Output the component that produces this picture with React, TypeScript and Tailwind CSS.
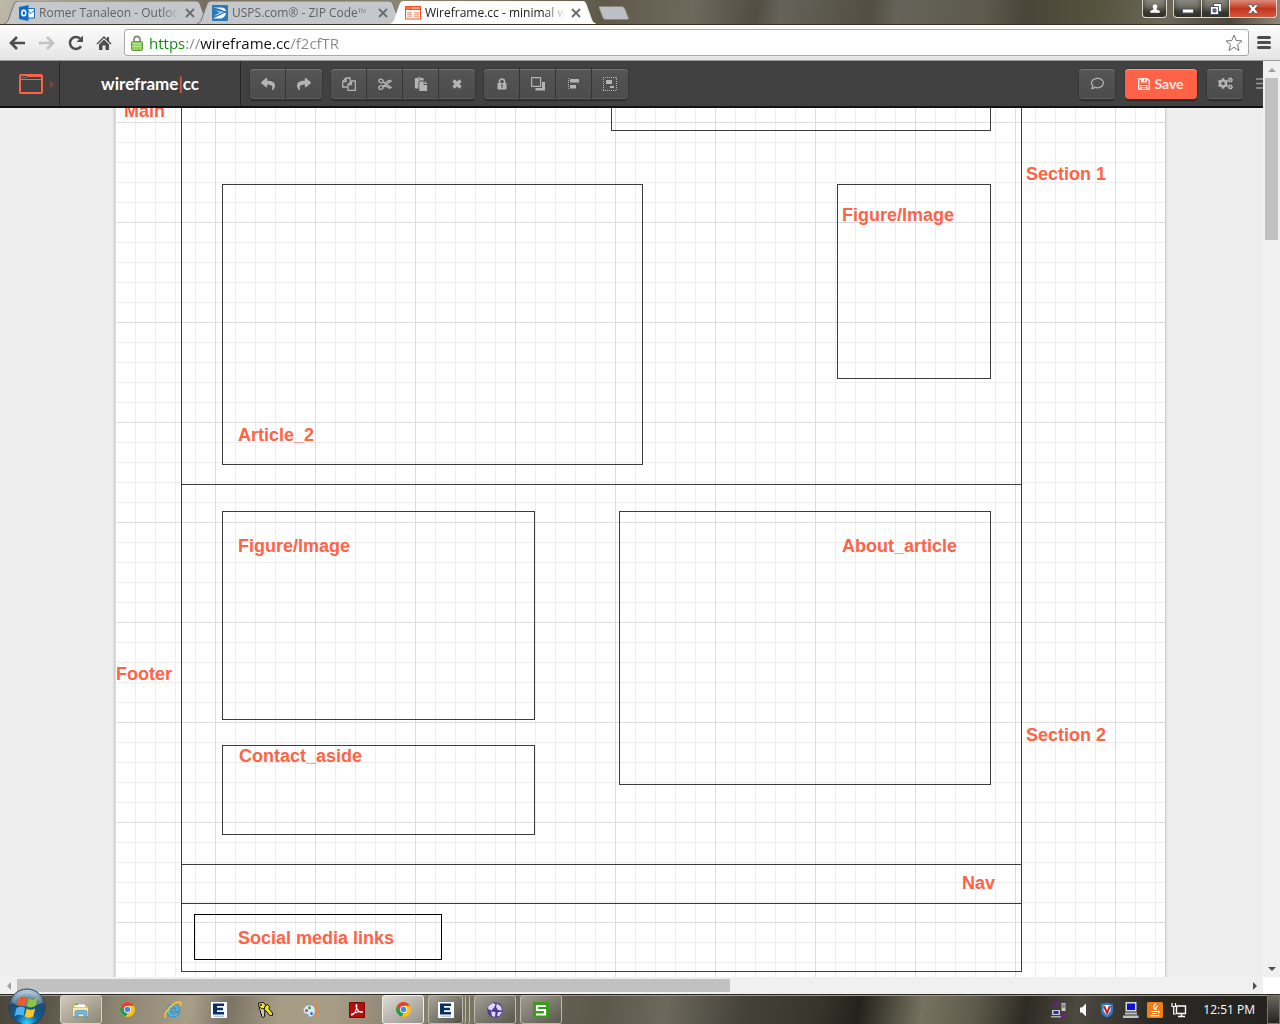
import React from 'react';
import { FaCogs, FaPaste, FaRegComment, FaReply, FaShare } from 'react-icons/fa';

type Children = { children?: React.ReactNode };

/* ---------- Browser chrome ---------- */

const OutlookIcon = () => (
  <svg viewBox="0 0 16 16" className="size-4">
    <path d="M8 3.500h7.500v9.500H8z" fill="#fff" stroke="#0f6cbd" />
    <path d="M8 5l4 3.500L15.500 5" fill="none" stroke="#0f6cbd" />
    <path d="M0 2l9.500-2v16L0 14z" fill="#0f6fc6" />
    <ellipse cx="4.800" cy="8" rx="2" ry="2.800" fill="none" stroke="#fff" strokeWidth="1.500" />
  </svg>
);

const UspsIcon = () => (
  <svg viewBox="0 0 16 16" className="size-4">
    <rect width="16" height="16" rx="1" fill="#2f78b7" />
    <path d="M1 2.500h9q4 .5 4 3.500H12Q9 4 1 2.500z" fill="#e6f0f8" />
    <path d="M1 13.500L12.500 8H14q-1 4.500-5 5.500z" fill="#fff" />
    <path d="M3 5.500l9 1.500L2 11.500q3-3 6-4z" fill="#c9dff0" />
  </svg>
);

const WireframeIcon = () => (
  <svg viewBox="0 0 16 16" className="size-4">
    <rect x="0.500" y="1.500" width="15" height="12.500" fill="#fff" stroke="#f4511e" />
    <path d="M0 1h16v4H0z" fill="#f4511e" />
    <path d="M1.500 3h1M3.500 3h1M6 3h8.500" stroke="#fff" />
    <path d="M2 7.500h5M2 9.500h5M2 11.500h5M9 7.500h5M9 9.500h5M9 11.500h5" stroke="#fbb092" strokeWidth="1.300" />
  </svg>
);

const tabs = [
  { title: 'Romer Tanaleon - Outlook', icon: <OutlookIcon />, active: false },
  { title: 'USPS.com® - ZIP Code™ Lookup', icon: <UspsIcon />, active: false },
  { title: 'Wireframe.cc - minimal wireframing', icon: <WireframeIcon />, active: true },
];

function Tab({ title, icon, active }: (typeof tabs)[number]) {
  return (
    <div className={active ? 'relative z-10 -mr-[13px] h-[23px] w-[206px]' : 'relative -mr-[13px] h-[23px] w-[206px]'}>
      <svg viewBox="0 0 206 23" preserveAspectRatio="none" className="absolute inset-0 size-full">
        <path
          d="M0 23C3 22 4 20 5 17L10 3Q11 0 14 0H192Q195 0 196 3L201 17C202 20 203 22 206 23"
          fill={active ? '#fdfdfd' : '#c5c8cb'}
          stroke={active ? '#eeeeee' : '#777469'}
        />
      </svg>
      <div className="relative flex h-full items-center pr-[14px] pl-[15px]">
        {icon}
        <button
          role="tab"
          aria-selected={active}
          className={
            active
              ? 'ml-1 w-[140px] overflow-hidden text-left text-xs whitespace-nowrap text-[#222] [mask-image:linear-gradient(to_right,#000_118px,transparent)]'
              : 'ml-1 w-[140px] overflow-hidden text-left text-xs whitespace-nowrap text-[#606264] [mask-image:linear-gradient(to_right,#000_124px,transparent)]'
          }
        >
          {title}
        </button>
        <button aria-label={`Close ${title}`} className="ml-1.5 text-[#6b6b6b]">
          <svg viewBox="0 0 10 10" className="size-[10px]">
            <path d="M1 1l8 8M9 1L1 9" stroke="currentColor" strokeWidth="1.800" />
          </svg>
        </button>
      </div>
    </div>
  );
}

function WindowControls() {
  const glass =
    'flex h-[18px] items-center justify-center border-white/70 bg-linear-to-b from-[#8a877e] via-[#6e6b60] to-[#5a574a] shadow-[inset_0_-7px_5px_#34322a]';
  return (
    <div className="ml-auto flex items-start pr-[3px]">
      <button aria-label="User" className={`${glass} mr-1.5 w-[25px] rounded-b border border-t-0`}>
        <svg viewBox="0 0 10 10" className="size-[10px]">
          <path
            d="M5 0a2.500 2.500 0 012 4.200V5.500l3 1.200V9H0V6.700l3-1.200V4.200A2.500 2.500 0 015 0z"
            fill="#fff"
            stroke="#444"
            strokeWidth="0.500"
          />
        </svg>
      </button>
      <button aria-label="Minimize" className={`${glass} w-[29px] rounded-bl border border-t-0`}>
        <svg viewBox="0 0 12 6" className="mt-1 h-[6px] w-3">
          <rect x="0.500" y="1" width="11" height="4" fill="#fff" stroke="#50536c" />
        </svg>
      </button>
      <button aria-label="Restore" className={`${glass} w-[27px] border-b`}>
        <svg viewBox="0 0 12 12" className="size-3">
          <path d="M3.500.500h8v8h-8z" fill="#fff" stroke="#50536c" />
          <path d="M.500 3.500h8v8h-8z" fill="#fff" stroke="#50536c" />
          <path d="M3 6h3v3H3z" fill="#777" stroke="#50536c" />
        </svg>
      </button>
      <button
        aria-label="Close"
        className="flex h-[18px] w-[48px] items-center justify-center rounded-br border border-t-0 border-white/70 bg-linear-to-b from-[#d98c7c] via-[#c3351b] to-[#d0563a]"
      >
        <svg viewBox="0 0 12 10" className="h-[10px] w-3">
          <path
            d="M.500.500H4L6 3l2-2.500h3.500L8 5l3.500 4.500H8L6 7 4 9.500H.500L4 5z"
            fill="#fff"
            stroke="#53545f"
            strokeWidth="0.800"
          />
        </svg>
      </button>
    </div>
  );
}

function TitleBar() {
  return (
    <div className="flex h-[25px] shrink-0 border-b border-[#3c3729] bg-[linear-gradient(97deg,#bdb8a8_0%,#77705f_16%,#8b8574_32%,#5f594a_47%,#6f695c_54%,#524e41_59%,#65625a_61%,#524e41_68%,#65635a_70%,#5d594b_77%,#494538_80%,#57543f_86%,#6d685a_91%,#4b473a_96%,#8c887b_100%)] pl-1">
      <div role="tablist" className="flex items-end">
        {tabs.map((t) => (
          <Tab key={t.title} {...t} />
        ))}
      </div>
      <button aria-label="New tab" className="mt-[6px] ml-[9px] h-[14px] pl-1.5">
        <svg viewBox="0 0 32 14" className="h-[14px] w-8">
          <path
            d="M1 1.500Q1 .500 2 .500H24Q26 .500 27 3L30.500 12Q31 13.500 29 13.500H8Q5.500 13.500 5 12z"
            fill="#bcc0c4"
            stroke="#8a877c"
          />
        </svg>
      </button>
      <WindowControls />
    </div>
  );
}

function AddressBar() {
  return (
    <div className="flex h-9 shrink-0 items-center border-b border-[#999] bg-linear-to-b from-[#fdfdfd] to-[#e4e4e4] px-[9px]">
      <button aria-label="Back" className="text-[#4d4d4d]">
        <svg viewBox="0 0 16 14" className="h-[14px] w-4">
          <path d="M8 1L2 7l6 6M2 7h14" fill="none" stroke="currentColor" strokeWidth="2.600" />
        </svg>
      </button>
      <button aria-label="Forward" className="ml-[14px] text-[#c2c2c2]">
        <svg viewBox="0 0 16 14" className="h-[14px] w-4">
          <path d="M8 1l6 6-6 6M14 7H0" fill="none" stroke="currentColor" strokeWidth="2.600" />
        </svg>
      </button>
      <button aria-label="Reload" className="ml-[13px] text-[#4d4d4d]">
        <svg viewBox="0 0 16 16" className="size-4">
          <path d="M13 11.200A6 6 0 1 1 12 3.500" fill="none" stroke="currentColor" strokeWidth="2.500" />
          <path d="M15 .500V7H8.500z" fill="currentColor" />
        </svg>
      </button>
      <button aria-label="Home" className="ml-3 text-[#4d4d4d]">
        <svg viewBox="0 0 16 16" className="size-4">
          <path d="M8 1L.500 8.500l1 1L8 3l6.500 6.500 1-1L13 6V2h-2v2z" fill="currentColor" />
          <path d="M3 9.500l5-5 5 5V15H9.500v-4.500h-3V15H3z" fill="currentColor" />
        </svg>
      </button>
      <div className="ml-3 flex h-[27px] flex-1 items-center rounded-[3px] border border-[#a9a9a9] bg-white px-[5px]">
        <svg viewBox="0 0 14 16" className="h-4 w-[14px]">
          <path d="M4 7V4.500a3 3 0 016 0V7" fill="none" stroke="#8d8d8d" strokeWidth="1.800" />
          <rect x="1.500" y="6.500" width="11" height="9" rx="1" fill="#8fd35c" stroke="#5f9a3c" />
          <path d="M3 9h8M3 11.500h8" stroke="#b9ec94" />
        </svg>
        <input
          aria-label="Address"
          defaultValue="https://wireframe.cc/f2cfTR"
          className="ml-[5px] min-w-0 flex-1 bg-[linear-gradient(to_right,#0b8a0b_37px,#888_37px,#888_51px,#111_51px,#111_140px,#888_140px)] bg-clip-text text-[15px] leading-5 text-transparent outline-none"
        />
        <button aria-label="Bookmark this page">
          <svg viewBox="0 0 18 18" className="size-[18px]">
            <path
              d="M9 1l2.200 5.500 5.800.4-4.500 3.800 1.500 5.800L9 13.300l-5 3.200 1.500-5.800L1 6.900l5.800-.4z"
              fill="#fff"
              stroke="#777"
              strokeLinejoin="round"
            />
          </svg>
        </button>
      </div>
      <button aria-label="Menu" className="ml-2 text-[#4d4d4d]">
        <svg viewBox="0 0 14 13" className="h-[13px] w-[14px]">
          <path d="M1.500 1.500h11M1.500 6.500h11M1.500 11.500h11" stroke="currentColor" strokeWidth="3" strokeLinecap="round" />
        </svg>
      </button>
    </div>
  );
}

/* ---------- Editor toolbar ---------- */

const CopyIcon = () => (
  <svg viewBox="0 0 14 14" className="size-[14px]" fill="none" stroke="currentColor" strokeWidth="1.300">
    <path d="M5.500 10H.700V4.500L4 1h4v3M4 1v3.500H.700" />
    <path d="M6 13.300V7.500L9.500 4h3.800v9.300zM9.500 4v3.500H6" />
  </svg>
);
const CutIcon = () => (
  <svg viewBox="0 0 14 14" className="size-[14px]" fill="none" stroke="currentColor" strokeWidth="1.400">
    <ellipse cx="3" cy="4" rx="2.200" ry="1.700" transform="rotate(25 3 4)" />
    <ellipse cx="3" cy="10.500" rx="2.200" ry="1.700" transform="rotate(-25 3 10.500)" />
    <path d="M5 5l8 5.500-1.500.800L5.500 8M5 9.500L13 4l-1.500-.800L6.500 6" />
  </svg>
);
const DeleteIcon = () => (
  <svg viewBox="0 0 10 10" className="size-[10px]">
    <path d="M1.500 1.500l7 7M8.500 1.500l-7 7" stroke="currentColor" strokeWidth="3.400" />
  </svg>
);
const LockIcon = () => (
  <svg viewBox="0 0 10 12" className="h-3 w-[10px]">
    <path d="M2.500 6V3.500a2.500 2.500 0 015 0V6" fill="none" stroke="currentColor" strokeWidth="1.700" />
    <rect x="0.500" y="5" width="9" height="6.500" rx="0.800" fill="currentColor" />
    <path d="M5 6.500v3.500M4 7h2" stroke="#505050" />
  </svg>
);
const LayersIcon = () => (
  <svg viewBox="0 0 14 14" className="size-[14px]">
    <path d="M.600.600h9v8.800h-9z" fill="none" stroke="currentColor" strokeWidth="1.200" />
    <path d="M11 5h3v8.500H4.500V11H11z" fill="currentColor" />
  </svg>
);
const AlignIcon = () => (
  <svg viewBox="0 0 12 14" className="h-[14px] w-3">
    <path d="M.500 1v12" stroke="currentColor" strokeDasharray="1 1" />
    <path d="M2 2h9v3.500H2zM2 8h6v3.500H2z" fill="currentColor" />
  </svg>
);
const GroupIcon = () => (
  <svg viewBox="0 0 14 14" className="size-[14px]">
    <path d="M0 .500h14M0 13.500h14M.500 0v14M13.500 0v14" stroke="currentColor" strokeDasharray="1 1" />
    <path d="M3 3h6v4H3zM7 9h4v2H7z" fill="currentColor" />
  </svg>
);
const FloppyIcon = () => (
  <svg viewBox="0 0 12 12" className="size-3">
    <path d="M.700.700h8.600l2 2v8.600H.700z" fill="none" stroke="currentColor" strokeWidth="1.400" />
    <path d="M3 0h6v4.500H3zM2.500 7h7v4.500h-7z" fill="currentColor" />
    <path d="M6.500 1.200v2M3.700 8.500h4.600M3.700 10.300h4.600" stroke="#ff6247" />
  </svg>
);

const toolGroups = [
  [
    { label: 'Undo', icon: <FaReply size={14} /> },
    { label: 'Redo', icon: <FaShare size={14} /> },
  ],
  [
    { label: 'Copy', icon: <CopyIcon /> },
    { label: 'Cut', icon: <CutIcon /> },
    { label: 'Paste', icon: <FaPaste size={14} /> },
    { label: 'Delete', icon: <DeleteIcon /> },
  ],
  [
    { label: 'Lock', icon: <LockIcon /> },
    { label: 'Bring forward', icon: <LayersIcon /> },
    { label: 'Align', icon: <AlignIcon /> },
    { label: 'Group', icon: <GroupIcon /> },
  ],
];

function ToolGroup({ children }: Children) {
  return (
    <div className="flex h-[30px] divide-x divide-[#343434] rounded bg-linear-to-b from-[#555] to-[#4c4c4c] text-[#b4b4b4] shadow-[inset_0_1px_0_#777,inset_0_-1px_0_#5c5c5c,0_0_0_1px_#363636,0_2px_1px_#2b2b2b]">
      {children}
    </div>
  );
}

function ToolButton({ label, children }: Children & { label: string }) {
  return (
    <button aria-label={label} className="flex w-9 items-center justify-center">
      {children}
    </button>
  );
}

function Toolbar() {
  return (
    <header className="flex h-[47px] shrink-0 items-stretch overflow-hidden border-b-2 border-[#111] bg-[#414141]">
      <button aria-label="Choose frame" className="flex w-[60px] items-center border-r border-[#262626] pl-[19px]">
        <svg viewBox="0 0 37 20" className="h-5 w-[37px]">
          <rect x="1" y="1" width="22" height="18" rx="1" fill="none" stroke="#ff6247" strokeWidth="2" />
          <path d="M1 5.500h22" stroke="#ff6247" />
          <path d="M3 3.500h1.500M5.500 3.500H7M8 2.500h14" stroke="#ff6247" />
          <path d="M31 6.500l5 4-5 4z" fill="#7b443b" />
        </svg>
      </button>
      <a
        href="#home"
        className="flex w-[181px] items-center justify-center border-r border-[#262626] font-['Lato'] text-[17px] font-bold text-white"
      >
        wireframe<span className="font-normal text-[#ff6247]">|</span>cc
      </a>
      <div className="flex items-center gap-[9px] pl-[9px]">
        {toolGroups.map((group, i) => (
          <ToolGroup key={i}>
            {group.map((tool) => (
              <ToolButton key={tool.label} label={tool.label}>
                {tool.icon}
              </ToolButton>
            ))}
          </ToolGroup>
        ))}
      </div>
      <div className="ml-auto flex items-center gap-2.5">
        <ToolGroup>
          <ToolButton label="Comments">
            <FaRegComment size={13} />
          </ToolButton>
        </ToolGroup>
        <button className="flex h-[30px] w-[72px] items-center justify-center gap-1 rounded bg-[#ff6247] font-['Lato'] text-sm font-bold text-[#ffe9e4] shadow-[inset_0_1px_0_#ff9a88,0_0_0_1px_#363636,0_2px_1px_#2b2b2b]">
          <FloppyIcon />
          Save
        </button>
        <ToolGroup>
          <ToolButton label="Settings">
            <FaCogs size={15} />
          </ToolButton>
        </ToolGroup>
        <button aria-label="More" className="ml-[3px] w-[7px] overflow-hidden text-[#9a9a9a]">
          <svg viewBox="0 0 7 11" className="h-[11px] w-[7px]">
            <path d="M0 1h7M0 5.500h7M0 10h7" stroke="currentColor" strokeWidth="1.500" />
          </svg>
        </button>
      </div>
    </header>
  );
}

/* ---------- Wireframe canvas ---------- */

const frames = [
  'left-[66px] -top-5 h-[397px] w-[841px] border-[#3c3c3c]',
  'left-[66px] top-[376px] h-[381px] w-[841px] border-[#3c3c3c]',
  'left-[66px] top-[756px] h-[40px] w-[841px] border-[#3c3c3c]',
  'left-[66px] top-[795px] h-[69px] w-[841px] border-[#3c3c3c]',
  'left-[496px] -top-5 h-[43px] w-[380px] border-[#3c3c3c]',
  'left-[107px] top-[76px] h-[281px] w-[421px] border-[#3c3c3c]',
  'left-[722px] top-[76px] h-[195px] w-[154px] border-[#3c3c3c]',
  'left-[107px] top-[403px] h-[209px] w-[313px] border-[#3c3c3c]',
  'left-[504px] top-[403px] h-[274px] w-[372px] border-[#3c3c3c]',
  'left-[107px] top-[637px] h-[90px] w-[313px] border-[#3c3c3c]',
  'left-[79px] top-[806px] h-[46px] w-[248px] border-black',
];

const labels = [
  { text: 'Main', at: 'left-[9px] -top-2' },
  { text: 'Section 1', at: 'left-[911px] top-[55px]' },
  { text: 'Figure/Image', at: 'left-[727px] top-[96px]' },
  { text: 'Article_2', at: 'left-[123px] top-[316px]' },
  { text: 'Figure/Image', at: 'left-[123px] top-[427px]' },
  { text: 'About_article', at: 'left-[727px] top-[427px]' },
  { text: 'Footer', at: 'left-[1px] top-[555px]' },
  { text: 'Section 2', at: 'left-[911px] top-[616px]' },
  { text: 'Contact_aside', at: 'left-[124px] top-[637px]' },
  { text: 'Nav', at: 'left-[847px] top-[764px]' },
  { text: 'Social media links', at: 'left-[123px] top-[819px]' },
];

function Canvas() {
  return (
    <main className="flex min-h-0 flex-1 justify-center overflow-hidden bg-[#eee] pl-[17px]">
      <div className="relative w-[1050px] shrink-0 bg-white bg-[linear-gradient(to_right,#ddd_1px,transparent_1px),linear-gradient(to_bottom,#ddd_1px,transparent_1px),linear-gradient(to_right,#ededed_1px,transparent_1px),linear-gradient(to_bottom,#ededed_1px,transparent_1px)] bg-size-[100px_100px,100px_100px,20px_20px,20px_20px] bg-position-[0_0,0_14px,0_0,0_14px] shadow-[0_0_2px_1px_#c4c4c4]">
        {frames.map((f) => (
          <div key={f} className={`absolute border ${f}`} />
        ))}
        {labels.map((l) => (
          <span
            key={l.at}
            className={`absolute font-['Liberation_Sans'] text-lg leading-[22px] font-bold whitespace-nowrap text-[#ff6247] ${l.at}`}
          >
            {l.text}
          </span>
        ))}
      </div>
    </main>
  );
}

function Arrow({ d, label, dim }: { d: string; label: string; dim?: boolean }) {
  return (
    <button aria-label={label} className="flex size-[17px] shrink-0 items-center justify-center">
      <svg viewBox="0 0 8 8" className="size-2">
        <path d={d} fill={dim ? '#a0a0a0' : '#505050'} />
      </svg>
    </button>
  );
}

/* ---------- Taskbar ---------- */

const ChromeIcon = () => (
  <svg viewBox="0 0 16 16" className="size-[15px]">
    <circle cx="8" cy="8" r="8" fill="#fbc116" />
    <path d="M8 8L1.100 4A8 8 0 0114.900 4H8z" fill="#db4437" />
    <path d="M1.100 4L4.500 10 8 8V4z" fill="#db4437" />
    <path d="M1.100 4L4.500 10 8 12l-2 3.700A8 8 0 011.100 4z" fill="#1f9d58" />
    <circle cx="8" cy="8" r="3.700" fill="#fff" />
    <circle cx="8" cy="8" r="2.900" fill="#4285f4" />
  </svg>
);
const FolderIcon = () => (
  <svg viewBox="0 0 18 16" className="h-4 w-[18px]">
    <path d="M1 2h6l1 1.500h8V14H1z" fill="#e8cb72" stroke="#b99a48" strokeWidth="0.600" />
    <path d="M3 2.500h10V5H3z" fill="#fff" />
    <path d="M3 2.500h3" stroke="#3aa655" />
    <path d="M1 6h15v8H1z" fill="#f9e7a5" />
    <path
      d="M3 15.500V10q0-1.500 1.500-1.500h9Q15 8.500 15 10v5.500h-3V12H6v3.500z"
      fill="#72b9e4"
      stroke="#3a86bd"
      strokeWidth="0.600"
    />
  </svg>
);
const ExplorerIcon = () => (
  <svg viewBox="0 0 18 18" className="size-[18px]">
    <path
      d="M15.500 10.300H6q.300 3 3.200 3 2 0 2.800-1.500h3.200Q13.700 16 9 16q-6-.200-6.300-6.500Q3 3.300 9.200 3.200q6.200.200 6.300 7.100zM6.100 8h6Q11.700 5.700 9.200 5.700 6.600 5.700 6.100 8z"
      fill="#4fbdf0"
      stroke="#1e7fbd"
      strokeWidth="0.700"
    />
    <path d="M1.500 16.500C-1 13 9 1 15 1q3 .300 1.500 4" fill="none" stroke="#f3c130" strokeWidth="1.800" />
  </svg>
);
const EIcon = () => (
  <svg viewBox="0 0 16 16" className="size-4">
    <path d="M0 0h16v16H0z" fill="#f7fafc" />
    <path d="M2 1.500h11v2.500H6v1.700h6v2.500H6V10h7v2.500H2z" fill="#0b2f63" />
    <path d="M3 13.500h10v1.500H3z" fill="#b7c7d3" />
  </svg>
);
const KeysIcon = () => (
  <svg viewBox="0 0 16 16" className="size-4">
    <path d="M5 3.500a3 3 0 013 3.500l-.500 7.500-1.500 1-1.500-1V12l-1-1V9A3 3 0 015 3.500z" fill="#c7c7c7" stroke="#111" />
    <path d="M1.500 1l5-.500L10 5 5.500 7 2 5z" fill="#eee62a" stroke="#111" />
    <path d="M8 4l2.500-1.500 2 2-.500 2.500L15.500 11v2.500H13L9 9 7 8z" fill="#e7df1c" stroke="#111" />
    <circle cx="4" cy="3" r="1" fill="#111" />
  </svg>
);
const PaintIcon = () => (
  <svg viewBox="0 0 16 16" className="size-4">
    <path
      d="M6 3c8-1 8 11 1.500 12-3 0-1-3-3.500-3C-1.500 12-1 4 6 3z"
      fill="#dbe9f5"
      stroke="#7fa4c4"
      strokeWidth="0.700"
    />
    <circle cx="3.500" cy="8.500" r="1.500" fill="#d94a3c" />
    <circle cx="6.500" cy="5.800" r="1.500" fill="#46a04a" />
    <circle cx="8.500" cy="11.500" r="1.500" fill="#3575c5" />
    <path d="M13.500 0q2.500 3 .800 6v9.500h-1.600V6q-1.700-3 .800-6z" fill="#e08a35" />
  </svg>
);
const PdfIcon = () => (
  <svg viewBox="0 0 16 16" className="size-4">
    <path d="M.500.500h15v15H.500z" fill="#b80d0d" stroke="#7c0808" />
    <path
      d="M3 13c3-1 5-6 4.800-9.500Q7.500 1.500 7 4c.500 3 3 6.500 6 6.500 2-1-2.500-2-10 1.500-1.500 1 .500 2 2-1"
      fill="none"
      stroke="#fff"
      strokeWidth="1.100"
    />
  </svg>
);
const GlobeIcon = () => (
  <svg viewBox="0 0 16 16" className="size-4">
    <circle cx="8" cy="8" r="7.800" fill="#4a3a9c" />
    <path
      d="M1.500 4l4-3 3 1-1 3-3 3.500L1 7zM10 1.500l4 3 1 4-4-.500-2-3zM4 9.500l4.500.500L8 15l-3-1zM11 10h4l-3 4.500-2-1z"
      fill="#ded7f6"
    />
  </svg>
);
const SIcon = () => (
  <svg viewBox="0 0 16 16" className="size-4">
    <path d="M0 0h16v16H0z" fill="#3a9a1c" />
    <path d="M13 4H4v4h8v4.500H3" fill="none" stroke="#fff" strokeWidth="2.200" />
  </svg>
);

const tasks = [
  { label: 'Explorer', icon: <FolderIcon />, look: 'open' },
  { label: 'Chrome', icon: <ChromeIcon />, look: 'pinned' },
  { label: 'Internet Explorer', icon: <ExplorerIcon />, look: 'pinned' },
  { label: 'E', icon: <EIcon />, look: 'pinned' },
  { label: 'Keys', icon: <KeysIcon />, look: 'pinned' },
  { label: 'Paint', icon: <PaintIcon />, look: 'pinned' },
  { label: 'PDF reader', icon: <PdfIcon />, look: 'pinned' },
  { label: 'Chrome window', icon: <ChromeIcon />, look: 'active' },
  { label: 'E windows', icon: <EIcon />, look: 'stack' },
  { label: 'Globe', icon: <GlobeIcon />, look: 'dim' },
  { label: 'S', icon: <SIcon />, look: 'dim' },
];

const looks: Record<string, string> = {
  pinned: 'w-[42px]',
  open: 'w-[42px] rounded-[3px] border border-[#d8d3c6] bg-linear-to-br from-[#d0cbbd] to-[#8d8777]',
  active: 'w-[42px] rounded-[3px] border border-[#f1efea] bg-linear-to-br from-[#dedbd5] to-[#96928a]',
  stack: 'w-[35px] rounded-[3px] border border-[#bdb9ae] bg-linear-to-br from-[#a8a599] to-[#55524a]',
  dim: 'w-[42px] rounded-[3px] border border-[#bdb9ae] bg-linear-to-br from-[#a09d92] to-[#5a574d]',
};

const trayIcons = [
  {
    label: 'Network transfer',
    icon: (
      <svg viewBox="0 0 16 16" className="size-4">
        <path d="M1 8h8v5H1z" fill="#c8c8c8" />
        <path d="M2.500 9h5v3h-5z" fill="#1a2fd0" />
        <path d="M0 14h10v1.500H0z" fill="#aaa" />
        <path d="M10.500 1h4v8h-4z" fill="#c8c8c8" />
        <path d="M11 3h3M11 5h3" stroke="#555" />
        <path
          d="M2 6V2h5M5 0l2.500 2L5 4M14 10.500V14h-3M12.500 12l-2 2 2 2"
          fill="none"
          stroke="#7a1b96"
          strokeWidth="1.200"
        />
      </svg>
    ),
  },
  {
    label: 'Volume',
    icon: (
      <svg viewBox="0 0 16 16" className="size-4">
        <path d="M5 5.500h2l4-4v13l-4-4H5z" fill="#fff" />
      </svg>
    ),
  },
  {
    label: 'Antivirus',
    icon: (
      <svg viewBox="0 0 16 16" className="size-4">
        <path d="M2 1.500q3 .500 6-1 3 1.500 6 1V9q0 4-6 6.500Q2 13 2 9z" fill="#2b7cc4" />
        <path d="M4.500 3h7v6L8 13.500 4.500 9z" fill="#fff" />
        <path d="M5 4l3 7 3-7" fill="none" stroke="#cc1f25" strokeWidth="2" />
      </svg>
    ),
  },
  {
    label: 'Computer',
    icon: (
      <svg viewBox="0 0 16 16" className="size-4">
        <path d="M2.500 0h11v9.500h-11z" fill="#d7d7d7" />
        <path d="M4 1.500h8V8H4z" fill="#0b13d6" />
        <path d="M2 10.500h12v2H2zM0 13.500h15.500V16H0z" fill="#c2c2c2" />
      </svg>
    ),
  },
  {
    label: 'Java',
    icon: (
      <svg viewBox="0 0 16 16" className="size-4">
        <rect width="16" height="16" rx="1.500" fill="#ee7d1a" />
        <path
          d="M9 1.500q-4 3-1 6M10.500 4q-3 2-1 4M4.500 9.500h6q3-.500 1 2M5 11.500h5M3.500 13.700h9"
          fill="none"
          stroke="#fff"
          strokeWidth="1.200"
        />
      </svg>
    ),
  },
  {
    label: 'Network',
    icon: (
      <svg viewBox="0 0 16 16" className="size-4">
        <path d="M5.500 4h9v7.500h-9zM7 14.500h7M10.500 12v2" fill="none" stroke="#fff" strokeWidth="1.400" />
        <path d="M1 1v3.500h3.500V1M2.700 4.500V12h2" fill="none" stroke="#fff" strokeWidth="1.200" />
      </svg>
    ),
  },
];

function Taskbar() {
  return (
    <footer className="relative flex h-[30px] shrink-0 items-stretch border-t border-[#2b2922] bg-[linear-gradient(100deg,#4b463b_0%,#5d5748_4%,#8a8371_9%,#a89e88_15%,#7b7464_18%,#a79d87_22%,#a79d87_26%,#8d8673_31%,#6f6a5a_40%,#5b5749_47%,#6c685c_52%,#45423a_58%,#37342c_64%,#24221d_67%,#77725f_72%,#5f5b4c_76%,#2e2b25_80%,#4b4940_84%,#2b2924_90%,#24221e_100%)] shadow-[inset_0_1px_0_#9c978a]">
      <div className="relative w-[60px] shrink-0">
        <button aria-label="Start" className="absolute -top-[7px] left-2 z-10">
          <svg viewBox="0 0 38 38" className="size-[38px]">
            <defs>
              <radialGradient id="orb" cx="0.500" cy="0.950" r="0.900">
                <stop offset="0" stopColor="#2fd5fb" />
                <stop offset="0.350" stopColor="#0f5c98" />
                <stop offset="0.750" stopColor="#23496a" />
                <stop offset="1" stopColor="#a9c6d8" />
              </radialGradient>
            </defs>
            <circle cx="19" cy="19" r="18" fill="url(#orb)" stroke="#24435a" />
            <path d="M4 15a15.500 15.500 0 0130 0Q19 22 4 15z" fill="#fff" opacity="0.300" />
            <path d="M11 10.500q4-3 8-.500l-1.500 8q-4-2.500-8.500 0z" fill="#ee5a24" />
            <path d="M20.500 10.500q4.500 2.500 9-.500l-2 8q-4.500 2.500-8.500.500z" fill="#8cc63f" />
            <path d="M8.500 20q4.500-2.500 8.500 0l-1.500 8q-4-2.500-9 0z" fill="#4db5ec" />
            <path d="M18.700 20.500q4 2.500 8.500 0l-2 8q-4.500 2.500-8.500 0z" fill="#fdc726" />
          </svg>
        </button>
      </div>
      <nav aria-label="Applications" className="flex gap-1">
        {tasks.map((t) => (
          <div key={t.label} className="flex w-[42px]">
            <button
              aria-label={t.label}
              className={`flex h-[29px] shrink-0 items-center justify-center ${looks[t.look]}`}
            >
              {t.icon}
            </button>
            {t.look === 'stack' && (
              <>
                <span className="w-1 rounded-r-[3px] border-r border-[#bdb9ae]" />
                <span className="w-1 shrink-0 rounded-r-[3px] border-r border-[#bdb9ae]" />
              </>
            )}
          </div>
        ))}
      </nav>
      <div className="ml-auto flex items-center gap-2">
        {trayIcons.map((t) => (
          <button key={t.label} aria-label={t.label}>
            {t.icon}
          </button>
        ))}
      </div>
      <time className="ml-4 self-center text-xs whitespace-nowrap text-white">12:51 PM</time>
      <button
        aria-label="Show desktop"
        className="ml-3 w-[13px] border border-[#77756e] bg-linear-to-b from-[#6a6861] to-[#26241f]"
      />
    </footer>
  );
}

export default function App() {
  return (
    <div className="flex h-screen flex-col overflow-hidden bg-white font-['Open_Sans','Noto_Sans',sans-serif]">
      <TitleBar />
      <AddressBar />
      <div className="flex min-h-0 flex-1">
        <div className="flex min-w-0 flex-1 flex-col">
          <Toolbar />
          <Canvas />
          <div className="flex h-[17px] shrink-0 items-center bg-[#f0f0f0]">
            <Arrow d="M6 0v8L2 4z" label="Scroll left" dim />
            <div className="flex-1">
              <div className="h-[13px] w-[58%] bg-[#c1c1c1]" />
            </div>
            <Arrow d="M2 0v8l4-4z" label="Scroll right" />
          </div>
        </div>
        <div className="mb-[17px] flex w-[17px] shrink-0 flex-col items-center bg-[#f0f0f0]">
          <Arrow d="M0 6h8L4 2z" label="Scroll up" dim />
          <div className="flex-1">
            <div className="h-[162px] w-[13px] bg-[#c1c1c1]" />
          </div>
          <Arrow d="M0 2h8L4 6z" label="Scroll down" />
        </div>
      </div>
      <Taskbar />
    </div>
  );
}
